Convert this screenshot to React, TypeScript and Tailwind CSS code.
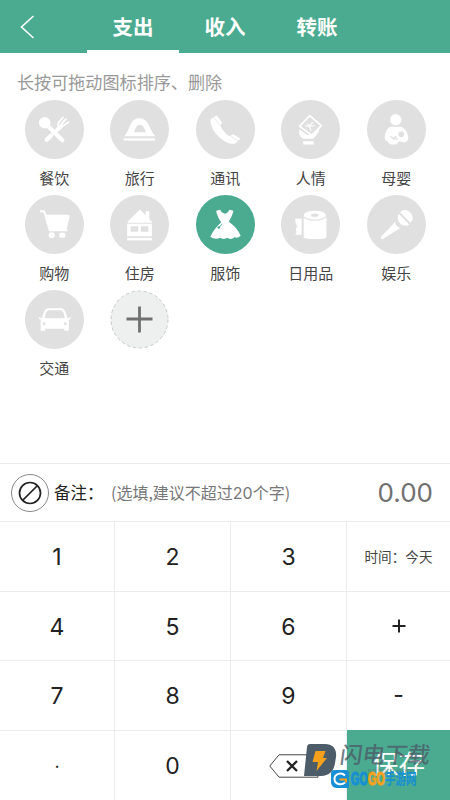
import type { ReactNode } from 'react';

interface Category {
  name: string;
  icon: ReactNode;
  active?: boolean;
}

const CUT = '#e0e0e0';

const categories: Category[] = [
  {
    name: '餐饮',
    icon: (
      <>
        <circle cx="19.5" cy="22.5" r="5.7" />
        <path
          d="M21 24 37 40M21.5 39.5 26 35.2M32 29.5 35.5 26.2"
          fill="none"
          stroke="#fff"
          strokeWidth="4.2"
          strokeLinecap="round"
        />
        <path
          d="m37.5 17.5-4 4.5c-2 3 0 6 3 4.5l6.5-4.5M40.5 19l-4.5 5"
          fill="none"
          stroke="#fff"
          strokeWidth="1.8"
          strokeLinecap="round"
        />
      </>
    ),
  },
  {
    name: '旅行',
    icon: (
      <>
        <path
          fillRule="evenodd"
          d="M14 36c3-3 4-7 6-11 2-5 5-7 9-7 5 0 8 3 10 8 2 4 3 7 6 10ZM24 32h11.5c-1-4-3-7.5-6-7.500S25 28 24 32Z"
        />
        <path d="M13.5 38h31v2.200h-31z" />
      </>
    ),
  },
  {
    name: '通讯',
    icon: (
      <>
        <path d="M14.500 19c-1.500 9 11 24 22.500 24.500 1.500 0 2.500-.5 3.200-1.500l3.800-3.500-7-4.500-3.500 2c-4-2-8-7-9.500-11l2-2.500-5.500-7.500Z" />
        <path d="m17.500 16.800 6 8M34.500 35.800l7 4.500" stroke={CUT} strokeWidth=".7" />
      </>
    ),
  },
  {
    name: '人情',
    icon: (
      <>
        <path d="M18.500 29c-1.500 4 0 7 3.500 9.500h10l5.500-7c1-2-1-4-2.500-2.500L31 35l-5.500-.5ZM22 41h10.500v3H22z" />
        <path
          d="m28.500 15.500 11.500 10-9.500 9.500L18.500 26Z"
          fill={CUT}
          stroke="#fff"
          strokeWidth="1.7"
          strokeLinejoin="round"
        />
        <path d="m23.500 25.800 4.500.2 3.500-4m-3.500 4 5.500-.5m-5.500.5 2 4.500m-4-7 2 2.500" fill="none" stroke="#fff" strokeWidth="1.1" />
      </>
    ),
  },
  {
    name: '母婴',
    icon: (
      <>
        <circle cx="28.5" cy="19.5" r="5.6" />
        <path d="M24 26.500h9.500c4 1 7 6 7.500 11 0 3-2.500 5-5.500 4.500L32 41l-3 3h-5c-2 0-3-1-3-2.500-3-1-4-3-3.300-6 .8-4 2.800-8.500 6.300-9Z" />
        <circle cx="34" cy="34" r="2.8" fill={CUT} />
        <path d="m23 36 3.500 2.500h4m-4 0 2.500-2.500" fill="none" stroke={CUT} strokeWidth="1.3" />
      </>
    ),
  },
  {
    name: '购物',
    icon: (
      <>
        <path
          d="M15.500 16h3l1.500 3 4.500 16h17"
          fill="none"
          stroke="#fff"
          strokeWidth="2"
          strokeLinecap="round"
        />
        <path d="M20.500 19.500h22c1 0 2 .8 1.700 2L41.500 33c-.3 1.200-1 2-2.300 2H25.500Z" />
        <circle cx="26.5" cy="40" r="3" />
        <rect x="34" y="37.5" width="6" height="5" rx="1.5" />
      </>
    ),
  },
  {
    name: '住房',
    icon: (
      <>
        <path d="m29.500 14.500 6 5.500v-4h3.500v8l3 3v.5H17.500v-1Z" />
        <path fillRule="evenodd" d="M17 28.500h24.500V41H17ZM20.500 31v5.500H28V31Zm10 0v5.500H38V31Z" />
        <path d="M17 42.500h24.500V45H17z" />
      </>
    ),
  },
  {
    name: '服饰',
    active: true,
    icon: (
      <>
        <path d="m20 15.500 4-.8c1 2.500 3 3.800 4.800 3.800s3.500-1.500 4.200-3.800l4 .8c-.5 4-2.500 7-4.500 11 5.500 3.500 9.500 8.500 11.800 14-2.300 2-4.300 2-6.300 1.500-2 2-5 2-7 .5-2 1.500-5 1.500-7 0-3 1.500-7 1-9.800-1 2.800-6 6.300-10.500 10.800-14.500-2-3-4.500-7-5-11.500Z" />
        <path d="M25.500 28.500c-.5 1.800-1 2.500-2.500 3" fill="none" stroke="#4aab90" strokeWidth=".8" />
        <circle cx="22.6" cy="32.2" r="1.3" fill="#4aab90" />
      </>
    ),
  },
  {
    name: '日用品',
    icon: (
      <>
        <path d="M22.500 20v22c0 2.500 22.500 2.500 22.500 0V20Z" />
        <ellipse cx="33.5" cy="20" rx="11.5" ry="5" stroke={CUT} strokeWidth="1" />
        <ellipse cx="33.5" cy="20" rx="3.8" ry="1.7" fill={CUT} />
        <path d="M14 23.500h6.500v16H14l1.500-2.500-1-3 1.500-3-1.500-3Z" />
      </>
    ),
  },
  {
    name: '娱乐',
    icon: (
      <>
        <path d="M33 17c3-3.500 8-2 10.500 1s2.500 7-.5 9.500Z" />
        <path d="m31.500 18.500 10.500 11c-5 2-8 0-9.500-1.800-2-2.500-3-6-1-9.200ZM28 26.500c0 3 2 5.500 5 6.200L16 43.500c-1.500 1-3-.5-2-2Z" />
      </>
    ),
  },
  {
    name: '交通',
    icon: (
      <>
        <path
          fillRule="evenodd"
          d="M17 28.500c1.500-8 3-10.500 7-10.500h11c4 0 5.500 2.500 7 10.500l1.500 2v10H39v-2.200H20v2.200h-4.500v-10ZM19.500 28h20c-1-6-2-8-4.500-8H24c-2.500 0-3.500 2-4.500 8Z"
        />
        <path d="m13.500 27 3.500.8v2l-3-.8ZM45.500 27l-3.500.8v2l3-.8Z" />
        <circle cx="19" cy="33.5" r="1.4" fill={CUT} />
        <circle cx="40" cy="33.5" r="1.4" fill={CUT} />
      </>
    ),
  },
];

const tabs = ['支出', '收入', '转账'];

function CategoryItem({ name, icon, active }: Category) {
  return (
    <div className="flex h-[95px] flex-col items-center">
      <div className={`h-[59px] w-[59px] rounded-full ${active ? 'bg-[#4aab90]' : 'bg-[#e0e0e0]'}`}>
        <svg viewBox="0 0 58.5 58.5" className="h-full w-full" fill="#fff">
          {icon}
        </svg>
      </div>
      <span className="mt-2 text-[15px] leading-[21px] text-[#444]">{name}</span>
    </div>
  );
}

function Key({ children, last }: { children?: ReactNode; last?: boolean }) {
  return (
    <button
      className={`flex items-center justify-center border-t border-[#ececec] pt-[2px] ${last ? '' : 'border-r'}`}
    >
      {children}
    </button>
  );
}

function Watermark() {
  return (
    <div className="pointer-events-none absolute top-[13px] left-[-44px] h-[50px] w-[136px]">
      <svg viewBox="0 0 34 34" className="absolute top-0 left-0 h-[34px] w-[34px]">
        <path d="M7 1h15c8 0 12 5 11 13l-1 6c-1 8-6 13-14 13H1L4 4c.3-2 1.300-3 3-3Z" fill="#4c5c69" />
        <path d="M12.500 8h10l-2.500 7h4L13.500 28l1.500-9H9.500Z" fill="#f5a11c" />
      </svg>
      <span className="absolute top-[-1px] left-[37px] -skew-x-8 text-[22.5px] leading-[26px] font-medium whitespace-nowrap text-[#4c5c69]/80">
        闪电下载
      </span>
      <span className="absolute top-[23px] left-[62px] font-['Liberation_Sans',sans-serif] text-[9px] leading-[10px] whitespace-nowrap text-[#4c5c69]/40">
        .sdbeta.com
      </span>
      <svg viewBox="0 0 20 20" className="absolute top-[26px] left-[27px] h-[20px] w-[20px]">
        <path d="M5 1h10c3 0 4 1 4 4v14H7c-4 0-6-3-6-6V5c0-3 1-4 4-4Z" fill="#168fd4" />
        <path d="M15 6.500c-4-4-10.500-1.500-10.500 3.500S11 17 15 13.500" fill="none" stroke="#fff" strokeWidth="2" />
        <path d="M9.500 10.500H16v3" fill="none" stroke="#f5a11c" strokeWidth="2" />
      </svg>
      <div className="absolute top-[26px] left-[48px] flex items-center leading-[20px] font-bold whitespace-nowrap text-[#168fd4]">
        <span className="w-[17px] origin-left scale-x-[.6] font-['Liberation_Sans',sans-serif] text-[18px] [-webkit-text-stroke:1.2px_#168fd4]">
          GO
        </span>
        <span className="w-[17px] origin-left scale-x-[.6] font-['Liberation_Sans',sans-serif] text-[18px] text-[#f5a11c] [-webkit-text-stroke:1.2px_#f5a11c]">
          GO
        </span>
        <span className="w-[32px] origin-left scale-x-[.7] text-[15px]">手游网</span>
      </div>
    </div>
  );
}

export default function App() {
  return (
    <div className="flex h-[800px] w-[450px] flex-col overflow-hidden bg-white font-['Noto_Sans_CJK_SC',sans-serif]">
      <header className="flex h-[53px] shrink-0 bg-[#4aab90]">
        <button className="flex w-[87px] items-center pl-5">
          <svg viewBox="0 0 15 24" className="h-6 w-[15px]" fill="none" stroke="#fff" strokeWidth="1.6">
            <path d="M13.500 1 1.500 12l12 11" />
          </svg>
        </button>
        {tabs.map((tab, i) => (
          <button
            key={tab}
            className={`h-[53px] w-[92px] border-b-[3px] pt-[3px] text-[20.5px] leading-[47px] font-bold text-white ${
              i === 0 ? 'border-white' : 'border-transparent'
            }`}
          >
            {tab}
          </button>
        ))}
      </header>

      <main className="flex-1 pt-4">
        <p className="pl-[17px] text-[17.1px] leading-[25px] text-[#999]">长按可拖动图标排序、删除</p>
        <div className="mt-[6px] ml-[11.5px] grid w-[427.5px] grid-cols-5">
          {categories.map((category) => (
            <CategoryItem key={category.name} {...category} />
          ))}
          <button className="flex h-[95px] justify-center">
            <svg viewBox="0 0 59 59" className="h-[59px] w-[59px]">
              <circle cx="29.5" cy="29.5" r="28.5" fill="#eef0ef" stroke="#c4cbc8" strokeDasharray="3.5 2.5" />
              <path d="M29.500 16.500v26M16.500 29h26" stroke="#707070" strokeWidth="2.8" />
            </svg>
          </button>
        </div>
      </main>

      <div className="flex h-[58px] shrink-0 items-center border-t border-[#ececec] pr-[17px] pl-[11px]">
        <div className="flex h-[38px] w-[38px] items-center justify-center rounded-full border border-[#888]">
          <svg viewBox="0 0 24 24" className="h-6 w-6" fill="none" stroke="#222" strokeWidth="1.7">
            <circle cx="12" cy="12" r="10.5" />
            <path d="M4.500 19.500 19.500 4.500" />
          </svg>
        </div>
        <span className="ml-[5px] w-[57px] pb-px text-[16.5px] whitespace-nowrap text-[#222]">备注：</span>
        <span className="pb-px text-[16px] whitespace-nowrap text-[#777]">
          (选填,建议不超过<span className="font-['Inter',sans-serif]">20</span>个字)
        </span>
        <span className="ml-auto font-['Inter',sans-serif] text-[26px] text-[#707070]">0.00</span>
      </div>

      <div className="grid h-[279px] shrink-0 grid-cols-[115px_116px_116px_103px] grid-rows-[70px_69px_70px_70px] font-['Inter','Noto_Sans_CJK_SC',sans-serif] text-[23px] text-[#222]">
        <Key>1</Key>
        <Key>2</Key>
        <Key>3</Key>
        <Key last>
          <span className="pb-[2px] font-['Noto_Sans_CJK_SC',sans-serif] text-[13.6px] whitespace-nowrap text-[#444]">
            时间：今天
          </span>
        </Key>
        <Key>4</Key>
        <Key>5</Key>
        <Key>6</Key>
        <Key last>
          <svg viewBox="0 0 16 16" className="mb-[2px] h-4 w-4" stroke="#222" strokeWidth="2">
            <path d="M8 1.500v13M1.500 8h13" />
          </svg>
        </Key>
        <Key>7</Key>
        <Key>8</Key>
        <Key>9</Key>
        <Key last>
          <span className="pb-[2px]">-</span>
        </Key>
        <Key>
          <span className="text-[18px]">·</span>
        </Key>
        <Key>0</Key>
        <Key>
          <svg viewBox="0 0 50 24" className="mb-[2px] ml-[11px] h-6 w-[50px]" fill="none">
            <path d="M49 .8H10L.8 12 10 23.200h39Z" stroke="#444" />
            <path d="m18 7 10 10M28 7 18 17" stroke="#222" strokeWidth="2.3" />
          </svg>
        </Key>
        <div className="relative flex items-center justify-center bg-[#4aab90]">
          <span className="text-[26.5px] text-white">保存</span>
          <Watermark />
        </div>
      </div>
    </div>
  );
}
